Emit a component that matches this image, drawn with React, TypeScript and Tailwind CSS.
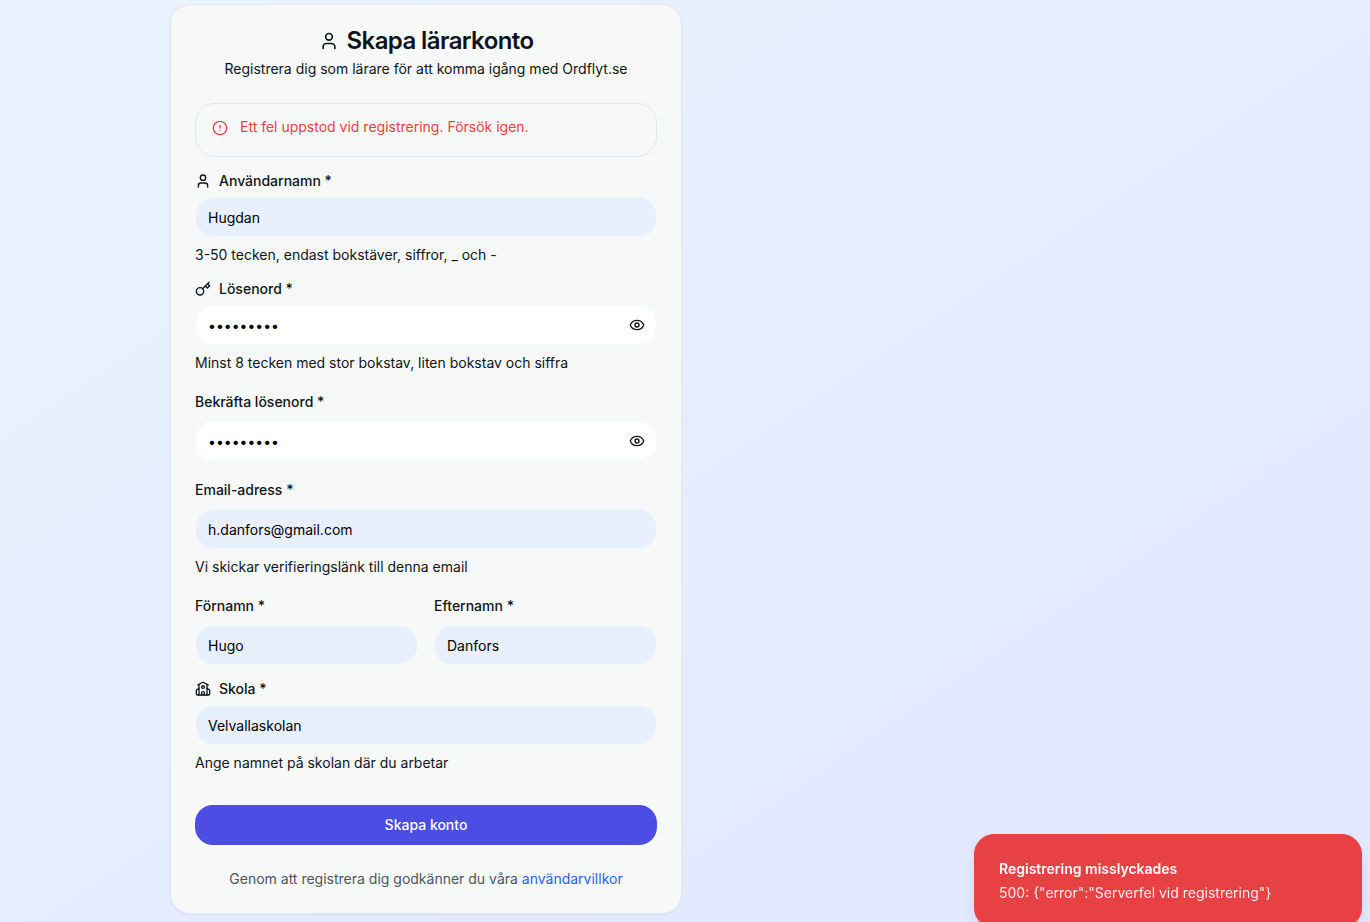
import { useState } from "react";
import type { ReactNode } from "react";
import { CircleAlert, Eye, EyeOff, School, User } from "lucide-react";

const inputBase =
  "block h-10 w-full rounded-[18px] border border-[#f6f9fa] px-3 py-2 text-sm text-black outline-none focus-visible:ring-2 focus-visible:ring-[#4b4de3]";

type FieldProps = {
  id: string;
  label: string;
  defaultValue: string;
  type?: string;
  icon?: ReactNode;
  help?: string;
};

function KeyIcon() {
  return (
    <svg
      className="size-4"
      viewBox="0 0 24 24"
      fill="none"
      stroke="currentColor"
      strokeWidth="2"
      strokeLinecap="round"
      strokeLinejoin="round"
      aria-hidden="true"
    >
      <circle cx="7.5" cy="15.5" r="5.5" />
      <path d="m21 2-9.6 9.6" />
      <path d="m15.5 7.5 3 3L22 7l-3-3" />
    </svg>
  );
}

function FieldLabel({ id, label, icon }: { id: string; label: string; icon?: ReactNode }) {
  if (icon) {
    return (
      <label htmlFor={id} className="flex items-center gap-2 text-sm leading-4 font-medium">
        {icon}
        {label}
      </label>
    );
  }
  return (
    <div className="text-base">
      <label htmlFor={id} className="text-sm leading-none font-medium">
        {label}
      </label>
    </div>
  );
}

function Field({ id, label, defaultValue, type = "text", icon, help }: FieldProps) {
  return (
    <div className="flex flex-col gap-2">
      <FieldLabel id={id} label={label} icon={icon} />
      <input id={id} type={type} defaultValue={defaultValue} className={`${inputBase} bg-[#e8f0fe]`} />
      {help && <p className="text-sm">{help}</p>}
    </div>
  );
}

function PasswordField({ id, label, defaultValue, icon, help }: FieldProps) {
  const [visible, setVisible] = useState(false);
  return (
    <div className="flex flex-col gap-2">
      <FieldLabel id={id} label={label} icon={icon} />
      <div className="relative">
        <input
          id={id}
          type={visible ? "text" : "password"}
          defaultValue={defaultValue}
          className={`${inputBase} bg-white pr-10`}
        />
        <button
          type="button"
          aria-label={visible ? "Dölj lösenord" : "Visa lösenord"}
          onClick={() => setVisible(!visible)}
          className="absolute inset-y-0 right-0 flex items-center px-3"
        >
          {visible ? <EyeOff className="size-4" /> : <Eye className="size-4" />}
        </button>
      </div>
      {help && <p className="text-sm">{help}</p>}
    </div>
  );
}

export default function App() {
  return (
    <div className="min-h-screen bg-linear-to-br from-[#ebf2ff] to-[#e0e7ff] px-4 pt-1 pb-2 font-['Inter',sans-serif] text-[#0f1419] lg:pl-[170px]">
      <main className="w-full max-w-lg rounded-[20px] border border-[#e1e8f2] bg-[#f7f9f8] shadow-xs">
        <header className="flex flex-col gap-1.5 p-6 text-center">
          <h1 className="flex items-center justify-center gap-2 text-2xl leading-6 font-semibold tracking-tight">
            <User className="size-5" />
            Skapa lärarkonto
          </h1>
          <p className="text-sm">Registrera dig som lärare för att komma igång med Ordflyt.se</p>
        </header>

        <form className="flex flex-col gap-4 px-6 pb-6" onSubmit={(e) => e.preventDefault()}>
          <div
            role="alert"
            className="flex gap-3 rounded-[20px] border border-[#e1e8ef] px-4 pt-[13px] pb-[19px] text-sm text-[#e84143]"
          >
            <CircleAlert className="mt-[3px] size-4" />
            <p>Ett fel uppstod vid registrering. Försök igen.</p>
          </div>

          <Field
            id="username"
            label="Användarnamn *"
            defaultValue="Hugdan"
            icon={<User className="size-4" />}
            help="3-50 tecken, endast bokstäver, siffror, _ och -"
          />
          <PasswordField
            id="password"
            label="Lösenord *"
            defaultValue="Losenord1"
            icon={<KeyIcon />}
            help="Minst 8 tecken med stor bokstav, liten bokstav och siffra"
          />
          <PasswordField id="confirm" label="Bekräfta lösenord *" defaultValue="Losenord1" />
          <Field
            id="email"
            type="email"
            label="Email-adress *"
            defaultValue="h.danfors@gmail.com"
            help="Vi skickar verifieringslänk till denna email"
          />
          <div className="grid grid-cols-2 gap-4">
            <Field id="first-name" label="Förnamn *" defaultValue="Hugo" />
            <Field id="last-name" label="Efternamn *" defaultValue="Danfors" />
          </div>
          <Field
            id="school"
            label="Skola *"
            defaultValue="Velvallaskolan"
            icon={<School className="size-4" />}
            help="Ange namnet på skolan där du arbetar"
          />

          <button
            type="submit"
            className="mt-4 h-10 w-full rounded-[18px] bg-[#4b4de3] px-4 text-sm font-medium text-white"
          >
            Skapa konto
          </button>
          <p className="mt-2 text-center text-sm text-[#4b5563]">
            Genom att registrera dig godkänner du våra{" "}
            <a href="#villkor" className="text-[#2563eb]">
              användarvillkor
            </a>
          </p>
        </form>
      </main>

      <div
        role="status"
        className="fixed right-2 -bottom-1.5 flex w-[388px] max-w-full flex-col gap-1 rounded-[20px] border border-[#e84143] bg-[#e84143] p-6 text-sm text-white shadow-lg"
      >
        <p className="font-semibold">Registrering misslyckades</p>
        <p className="opacity-90">{'500: {"error":"Serverfel vid registrering"}'}</p>
      </div>
    </div>
  );
}
